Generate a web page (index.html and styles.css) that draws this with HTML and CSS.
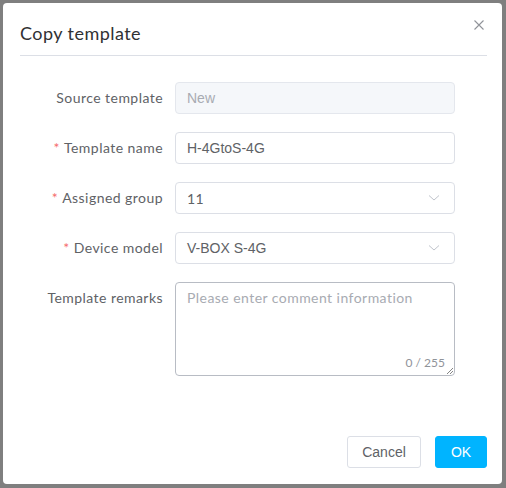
FILE: index.html
```html
<!DOCTYPE html>
<html>
<head>
<meta charset="utf-8">
<link rel="stylesheet" href="styles.css">
</head>
<body>
<div class="dialog">
  <div class="header">
    <span class="title">Copy template</span>
    <svg class="close" width="10" height="10" viewBox="0 0 10 10"><path d="M0.5 0.5L9.5 9.5M9.5 0.5L0.5 9.5" stroke="#909399" stroke-width="1.1" fill="none"/></svg>
  </div>
  <div class="body">
    <div class="row">
      <div class="label">Source template</div>
      <div class="input disabled"><span class="arial">New</span></div>
    </div>
    <div class="row">
      <div class="label"><span class="req">*</span>Template name</div>
      <div class="input"><span class="arial">H-4GtoS-4G</span></div>
    </div>
    <div class="row">
      <div class="label"><span class="req">*</span>Assigned group</div>
      <div class="input select"><span class="sans">11</span>
        <svg class="chev" width="12" height="8" viewBox="0 0 12 8"><path d="M1 1.5L6 6L11 1.5" stroke="#c0c4cc" stroke-width="1" fill="none"/></svg>
      </div>
    </div>
    <div class="row">
      <div class="label"><span class="req">*</span>Device model</div>
      <div class="input select"><span class="arial">V-BOX S-4G</span>
        <svg class="chev" width="12" height="8" viewBox="0 0 12 8"><path d="M1 1.5L6 6L11 1.5" stroke="#c0c4cc" stroke-width="1" fill="none"/></svg>
      </div>
    </div>
    <div class="row">
      <div class="label">Template remarks</div>
      <div class="textarea">
        <span class="placeholder">Please enter comment information</span>
        <span class="count">0 / 255</span>
        <svg class="grip" width="7" height="7" viewBox="0 0 7 7"><path d="M1 7L7 1M4 7L7 4" stroke="#666" stroke-width="0.8" fill="none"/></svg>
      </div>
    </div>
  </div>
  <div class="footer">
    <button class="btn cancel">Cancel</button>
    <button class="btn ok">OK</button>
  </div>
</div>
</body>
</html>
```
FILE: styles.css
```css
html, body {
  margin: 0;
  padding: 0;
  background: #7f7f7f;
}
body {
  padding: 3px 4px 4px 3px;
  width: 506px;
  height: 488px;
  box-sizing: border-box;
}
.dialog {
  background: #fff;
  border-radius: 4px;
  height: 481px;
  box-sizing: border-box;
  display: flex;
  flex-direction: column;
  padding: 0 15px 0 17px;
  font-family: Lato, "Noto Sans", sans-serif;
  letter-spacing: 0.45px;
}
.header {
  position: relative;
  height: 52px;
  border-bottom: 1px solid #dcdfe6;
  display: flex;
  align-items: flex-end;
}
.title {
  font-size: 18px;
  color: #303133;
  line-height: 24px;
  margin-bottom: 10px;
}
.close {
  position: absolute;
  right: 3px;
  top: 17px;
}
.body {
  padding-top: 26px;
  flex: 1;
}
.row {
  display: flex;
  align-items: flex-start;
  margin-bottom: 18px;
}
.label {
  width: 143px;
  padding-right: 12px;
  text-align: right;
  font-size: 14px;
  color: #606266;
  line-height: 32px;
  white-space: nowrap;
}
.req {
  color: #f56c6c;
  margin-right: 4px;
}
.input {
  width: 280px;
  height: 32px;
  box-sizing: border-box;
  border: 1px solid #dcdfe6;
  border-radius: 4px;
  padding: 0 11px;
  display: flex;
  align-items: center;
  font-size: 14px;
  color: #606266;
}
.input.disabled {
  background: #f5f7fa;
  border-color: #e4e7ed;
  color: #a8abb2;
}
.arial {
  font-family: "Liberation Sans", Arial, sans-serif;
  letter-spacing: 0;
}
.sans {
  font-family: Lato, "Noto Sans", sans-serif;
}
.select {
  justify-content: space-between;
}
.chev {
  margin-right: 3px;
}
.textarea {
  position: relative;
  width: 280px;
  height: 94px;
  box-sizing: border-box;
  border: 1px solid #b8bcc4;
  border-radius: 4px;
  padding: 5px 11px;
  font-size: 14px;
  line-height: 20px;
}
.placeholder {
  color: #a8abb2;
}
.count {
  position: absolute;
  right: 9px;
  bottom: 2px;
  font-size: 12px;
  color: #909399;
  letter-spacing: 0;
}
.grip {
  position: absolute;
  right: 1px;
  bottom: 1px;
}
.footer {
  display: flex;
  justify-content: flex-end;
  gap: 14px;
  padding-bottom: 16px;
}
.btn {
  height: 32px;
  box-sizing: border-box;
  border-radius: 3px;
  font-family: "Liberation Sans", Arial, sans-serif;
  font-size: 14px;
  letter-spacing: 0;
  padding: 0;
  cursor: pointer;
}
.cancel {
  width: 74px;
  background: #fff;
  border: 1px solid #dcdfe6;
  color: #606266;
}
.ok {
  width: 52px;
  background: #00b4ff;
  border: 1px solid #00b4ff;
  color: #fff;
}
```
